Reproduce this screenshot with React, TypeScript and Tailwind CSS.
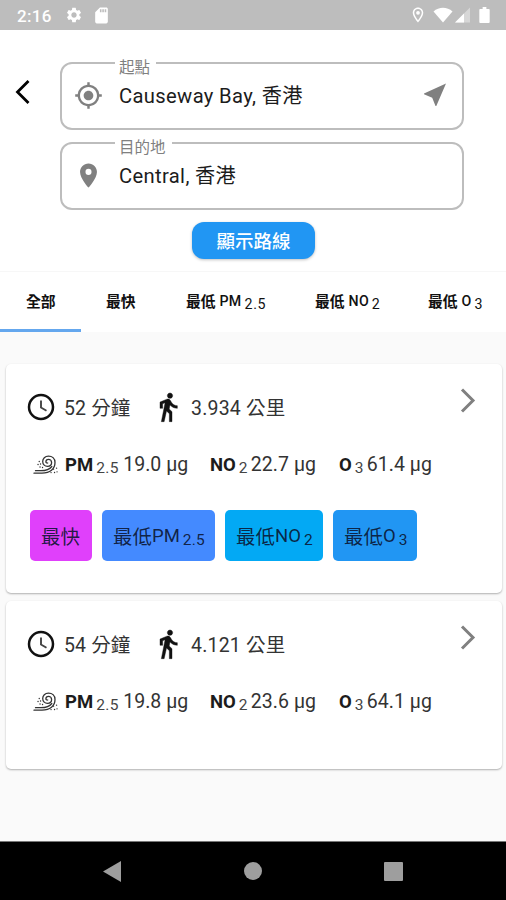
import type { ReactNode } from "react";
import {
  MdGpsFixed,
  MdLocationOn,
  MdOutlineLocationOn,
  MdSdCard,
  MdSettings,
} from "react-icons/md";

function StatusBar() {
  return (
    <header className="flex h-[30px] shrink-0 items-center bg-[#bdbdbd] pl-[17px] pr-[16px] text-white">
      <span className="w-[48px] pt-[1px] text-[17px] font-medium leading-5 tracking-[0.3px]">2:16</span>
      <MdSettings className="size-[18px]" />
      <MdSdCard className="ml-[9px] size-[19px]" />
      <MdOutlineLocationOn className="ml-auto size-[18px]" />
      <svg className="ml-[6px] h-[16px] w-[20px]" viewBox="0 0 20 16" fill="currentColor">
        <path d="M0.5 4.5C6 -0.5 14 -0.5 19.5 4.5L10 15.5Z" />
      </svg>
      <svg className="ml-[2px] h-[16px] w-[16px]" viewBox="0 0 16 16" fill="currentColor">
        <path d="M15 0.5V15.5H0Z" opacity=".4" />
        <path d="M9 6.5V15.5H0Z" />
      </svg>
      <svg className="ml-[8px] h-[16px] w-[11px]" viewBox="0 0 11 17" fill="currentColor">
        <path d="M3.5 0H7.5V2H10Q11 2 11 3V16Q11 17 10 17H1Q0 17 0 16V3Q0 2 1 2H3.5Z" />
      </svg>
    </header>
  );
}

function SendArrow() {
  return (
    <svg className="h-[29px] w-[29px]" viewBox="0 0 29 29" fill="currentColor">
      <path d="M26 2.500L16.300 25H15.500L12.200 16.800L4 13.300V12.500Z" />
    </svg>
  );
}

function Field({ label, value, icon, trailing }: { label: string; value: string; icon: ReactNode; trailing?: ReactNode }) {
  return (
    <fieldset className="h-[76px] rounded-[12px] border-2 border-[#bdbdbd] pl-[12px] pr-[13px]">
      <legend className="ml-[41px] h-[18px] pl-[4px] pr-[6px] text-[15.500px] leading-[18px] text-[#808080]">
        <span className="block translate-y-[5px]">{label}</span>
      </legend>
      <div className="flex h-[47px] items-center text-[#808080]">
        {icon}
        <span className="ml-[16px] whitespace-nowrap pt-[1px] text-[20.200px] leading-6 tracking-[0.350px] text-[#1c1c1c]">{value}</span>
        <span className="ml-auto">{trailing}</span>
      </div>
    </fieldset>
  );
}

function Tab({ name, gas, sub, className }: { name: string; gas?: string; sub?: string; className: string }) {
  return (
    <button className={`flex h-full shrink-0 items-center whitespace-nowrap text-[14.800px] font-medium leading-5 text-[#111] ${className}`}>
      <span className="font-bold">{name}</span>
      {gas && <span className="ml-[4px] -mt-[3px] text-[14.200px] tracking-[0.200px]">{gas}</span>}
      {sub && <span className="ml-[3px] mt-[3px] text-[14.200px] font-normal tracking-[0.700px]">{sub}</span>}
    </button>
  );
}

function ClockIcon() {
  return (
    <svg className="h-[32px] w-[32px]" viewBox="0 0 32 32" fill="none">
      <circle cx="16" cy="16" r="12" stroke="#111" strokeWidth="2.500" />
      <path d="M16 9.500V16.500L21.500 19.700" stroke="#444" strokeWidth="1.900" />
    </svg>
  );
}

function WalkIcon() {
  return (
    <svg className="h-[32px] w-[32px]" viewBox="0 0 24 24" fill="#111" stroke="#111" strokeWidth="0.3">
      <path d="M13.500 5.500c1.100 0 2-.9 2-2s-.9-2-2-2-2 .9-2 2 .9 2 2 2zM9.800 8.900L7 23h2.100l1.800-8 2.100 2v6h2v-7.500l-2.100-2 .6-3C14.800 12 16.800 13 19 13v-2c-1.900 0-3.500-1-4.300-2.400l-1-1.600c-.4-.6-1-1-1.700-1-.3 0-.5.1-.8.100L6 8.300V13h2V9.600l1.800-.7" />
    </svg>
  );
}

function WindIcon() {
  return (
    <svg className="h-[20px] w-[25px] shrink-0" viewBox="0 0 25 20" fill="none" stroke="#333" strokeWidth="1.3" strokeLinecap="round">
      <path d="M1 18.2H9C17 18.2 22 14 22 7.5C22 3.500 19 1.200 15.500 1.200C12 1.200 9.700 3.500 9.700 6.500C9.700 9.500 12 11.300 14.500 11.300C17 11.300 18.600 9.500 18.600 7.500C18.600 5.600 17.200 4.400 15.500 4.400C13.900 4.400 12.900 5.500 12.900 6.700C12.900 7.700 13.700 8.300 14.700 8" />
      <path d="M2.500 15.700H8C12.500 15.700 16.500 14.500 18.800 11.500" />
      <path d="M6.200 6.500h.1M5 9.500h.1M7.500 9h.1M7 12h.1M9.500 12.500h.1M20.500 14.200h.1M23.500 13.200h.1M18 17.600h.1M21.500 17.500h.1M24 16.800h.1" />
    </svg>
  );
}

function Reading({ gas, sub, value, className, subClass }: { gas: string; sub: string; value: string; className: string; subClass: string }) {
  return (
    <div className={`flex shrink-0 items-center whitespace-nowrap ${className}`}>
      <b className="font-bold">{gas}</b>
      <span className={`mt-[6px] text-[15.500px] tracking-[0.400px] text-[#444] ${subClass}`}>{sub}</span>
      <span className="text-[19.500px] tracking-[0.050px] text-[#333]">{value}</span>
    </div>
  );
}

function Badge({ name, gas, sub, className }: { name: string; gas?: string; sub?: string; className: string }) {
  return (
    <div className={`flex h-[51px] items-center whitespace-nowrap rounded-[5px] pl-[11px] pt-[4px] text-[19.500px] leading-6 text-[#0b1530]/90 ${className}`}>
      <span>{name}</span>
      {gas && <span className="-mt-[3px] text-[18.500px]">{gas}</span>}
      {sub && <span className="ml-[3px] mt-[4px] text-[15.500px] tracking-[0.200px]">{sub}</span>}
    </div>
  );
}

type Route = { time: string; distance: string; pm: string; no: string; o: string; best: boolean };

const routes: Route[] = [
  { time: "52 分鐘", distance: "3.934 公里", pm: "19.0 µg", no: "22.7 µg", o: "61.4 µg", best: true },
  { time: "54 分鐘", distance: "4.121 公里", pm: "19.8 µg", no: "23.6 µg", o: "64.1 µg", best: false },
];

function RouteCard({ route }: { route: Route }) {
  return (
    <article className={`rounded-[5px] bg-white pl-[19px] pr-[26px] shadow-[0_1px_2px_rgba(0,0,0,0.3)] ${route.best ? "h-[229px]" : "h-[168px]"}`}>
      <div className="flex h-[86px] items-center whitespace-nowrap text-[19.500px] leading-6 text-[#333]">
        <ClockIcon />
        <span className="ml-[7px] w-[88px] pt-[3px] tracking-[0.150px]">{route.time}</span>
        <WalkIcon />
        <span className="ml-[7px] pt-[3px] tracking-[0.200px]">{route.distance}</span>
        <svg className="-mt-[14px] ml-auto h-[25px] w-[16px]" viewBox="0 0 16 25" fill="none" stroke="#808080" strokeWidth="3">
          <path d="M2 1.500L13 12.500L2 23.500" />
        </svg>
      </div>
      <div className="flex h-[28px] items-center pl-[8px] pt-[1px] text-[18.500px] leading-6 text-[#1c1c1c]">
        <WindIcon />
        <Reading gas="PM" sub="2.5" value={route.pm} className="ml-[7px] w-[145px]" subClass="ml-[3px] w-[27px]" />
        <Reading gas="NO" sub="2" value={route.no} className="w-[129px]" subClass="ml-[3px] w-[12px]" />
        <Reading gas="O" sub="3" value={route.o} className="w-[100px]" subClass="ml-[3px] w-[12px]" />
      </div>
      {route.best && (
        <div className="flex gap-[10px] pl-[5px] pt-[32px]">
          <Badge name="最快" className="w-[62px] bg-[#e040fb]" />
          <Badge name="最低" gas="PM" sub="2.5" className="w-[113px] bg-[#448aff]" />
          <Badge name="最低" gas="NO" sub="2" className="w-[98px] bg-[#03a9f4]" />
          <Badge name="最低" gas="O" sub="3" className="w-[84px] bg-[#2196f3]" />
        </div>
      )}
    </article>
  );
}

export default function App() {
  return (
    <div className="flex h-[900px] w-[506px] flex-col overflow-hidden bg-[#fafafa] font-[Roboto,'Noto_Sans_CJK_TC',sans-serif]">
      <StatusBar />
      <section className="flex h-[241px] shrink-0 bg-white">
        <button className="h-fit w-[60px] pl-[15px] pt-[50px]" aria-label="返回">
          <svg className="h-[24px] w-[15px]" viewBox="0 0 15 24" fill="none" stroke="#000" strokeWidth="2.800">
            <path d="M13.500 1L2.500 12L13.500 23" />
          </svg>
        </button>
        <div className="flex w-[404px] flex-col gap-[4px] pt-[24px]">
          <Field label="起點" value="Causeway Bay, 香港" icon={<MdGpsFixed className="size-[29px]" />} trailing={<SendArrow />} />
          <Field label="目的地" value="Central, 香港" icon={<MdLocationOn className="size-[29px]" />} />
          <button className="ml-[132px] mt-[8px] h-[37px] w-[123px] shrink-0 rounded-[12px] bg-[#2196f3] pt-[2px] text-[18.500px] font-medium leading-6 text-white shadow-[0_1px_3px_rgba(0,0,0,0.25)]">
            顯示路線
          </button>
        </div>
      </section>
      <nav className="flex h-[61px] shrink-0 border-t border-[#f7f7f7] bg-white">
        <Tab name="全部" className="w-[81px] border-b-[3px] border-[#64a7ee] pl-[26px] pt-[3px]" />
        <Tab name="最快" className="w-[105px] pl-[25px]" />
        <Tab name="最低" gas="PM" sub="2.5" className="w-[129px]" />
        <Tab name="最低" gas="NO" sub="2" className="w-[113px]" />
        <Tab name="最低" gas="O" sub="3" className="w-[60px]" />
      </nav>
      <main className="flex grow flex-col gap-[8px] pl-[6px] pr-[4px] pt-[32px]">
        {routes.map((route) => (
          <RouteCard key={route.time} route={route} />
        ))}
      </main>
      <footer className="flex h-[59px] shrink-0 items-center border-t border-[#777] bg-black pl-[103px] text-[#9e9e9e]">
        <svg className="h-[21px] w-[18px]" viewBox="0 0 18 21" fill="currentColor">
          <path d="M18 0V21L0 10.500Z" />
        </svg>
        <span className="ml-[123px] size-[18px] rounded-full bg-current" />
        <span className="ml-[122px] size-[19px] rounded-[1px] bg-current" />
      </footer>
    </div>
  );
}
